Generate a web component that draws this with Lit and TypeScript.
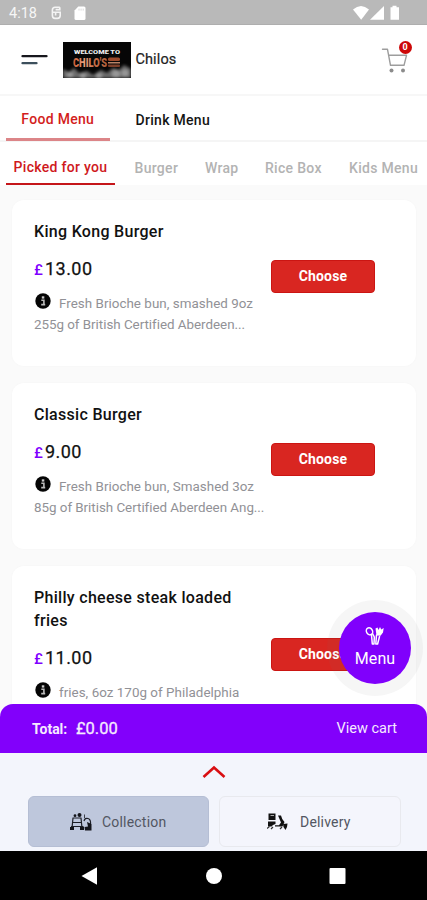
import { LitElement, html, css, svg } from "lit";
import { customElement, property } from "lit/decorators.js";

interface Dish {
  name: string;
  price: string;
  lines: string[];
}

const dishes: Dish[] = [
  {
    name: "King Kong Burger",
    price: "13.00",
    lines: ["Fresh Brioche bun, smashed 9oz", "255g of British Certified Aberdeen..."],
  },
  {
    name: "Classic Burger",
    price: "9.00",
    lines: ["Fresh Brioche bun, Smashed 3oz", "85g of British Certified Aberdeen Ang..."],
  },
  {
    name: "Philly cheese steak loaded fries",
    price: "11.00",
    lines: ["fries, 6oz 170g of Philadelphia", ""],
  },
];

@customElement("dish-card")
export class DishCard extends LitElement {
  @property({ attribute: false }) dish!: Dish;

  static styles = css`
    :host {
      display: block;
      box-sizing: border-box;
      flex: none;
      min-height: 166px;
      padding: 20px 41px 30px 22px;
      border-radius: 12px;
      background: #fff;
      box-shadow: 0 0 3px rgba(0, 0, 0, 0.025);
    }
    .row { display: flex; align-items: center; }
    .info { width: 238px; flex: none; white-space: nowrap; }
    .name {
      width: 210px;
      white-space: normal;
      font-size: 16px;
      line-height: 23px;
      font-weight: 500;
      letter-spacing: 0.3px;
      color: #111;
    }
    .price {
      display: flex;
      align-items: baseline;
      gap: 2px;
      margin-top: 14px;
      height: 24px;
      line-height: 24px;
      font-size: 18px;
      letter-spacing: 0.45px;
      color: #111;
    }
    .price span { color: #8000ff; font-size: 15px; font-weight: 500; width: 9px; letter-spacing: 0; }
    .price b { font-weight: 400; -webkit-text-stroke: 0.25px #111; }
    .desc {
      display: flex;
      margin-top: 12px;
      height: 21px;
      line-height: 21px;
      font-size: 13.4px;
      letter-spacing: 0.03px;
      color: #919196;
    }
    .desc.second { margin-top: 0; letter-spacing: -0.03px; }
    .dot { width: 16px; height: 16px; margin: 0 8px 0 1px; flex: none; }
    .choose {
      flex: none;
      width: 104px;
      height: 33px;
      margin: -2px 0 0 -1px;
      box-sizing: border-box;
      border: 1px solid #cb1512;
      border-radius: 4px;
      background: #d92621;
      color: #fff;
      font: 700 14px/31px Roboto, sans-serif;
      letter-spacing: 0.15px;
      text-align: center;
      padding: 0;
    }
  `;

  render() {
    const d = this.dish;
    return html`<div class="row">
      <div class="info">
        <div class="name">${d.name}</div>
        <div class="price"><span>£</span><b>${d.price}</b></div>
        <div class="desc">
          <svg class="dot" viewBox="0 0 16 16">
            <circle cx="8" cy="8" r="7.7" fill="#050505" />
            <path d="M6.3 7.300H8.900V11M6.200 11.600H10.200" stroke="#bbb" stroke-width="1.600" fill="none" />
            <rect x="6.800" y="3.300" width="2.500" height="2.300" fill="#ccc" />
          </svg>
          <span>${d.lines[0]}</span>
        </div>
        <div class="desc second"><span>${d.lines[1]}</span></div>
      </div>
      <button class="choose">Choose</button>
    </div>`;
  }
}

const statusLeft = svg`
  <g fill="none" stroke="#f4f4f4" stroke-width="1.6">
    <path d="M8.8 1.2H4.2Q1.4 1.2 1.4 4V6.2H8.4M1.4 6.2V9.6Q1.4 12.4 4 12.4H6.4Q9.2 12.4 9.2 9.6V6.2H4.6V9.4M8.8 1.2V3.6H4.6" />
  </g>`;

@customElement("app-root")
export class AppRoot extends LitElement {
  static styles = css`
    :host {
      display: flex;
      flex-direction: column;
      position: relative;
      width: 427px;
      height: 900px;
      overflow: hidden;
      background: #fafafa;
      font-family: Roboto, "Liberation Sans", sans-serif;
      white-space: nowrap;
    }
    svg { display: block; flex: none; }
    .status {
      flex: none;
      display: flex;
      align-items: center;
      box-sizing: border-box;
      height: 25px;
      padding: 2px 0 0 9px;
      background: #b9b9b9;
      border-bottom: 1px solid #aeaeae;
      color: #f6f6f6;
    }
    .clock { width: 42px; font-size: 14.5px; letter-spacing: 0; padding-top: 1px; }
    .sd { margin-left: 12px; }
    .signals { margin-left: auto; margin-right: 26px; }
    .header {
      flex: none;
      display: flex;
      align-items: center;
      box-sizing: border-box;
      height: 71px;
      padding: 0 14px 0 21px;
      background: #fff;
      border-bottom: 2px solid #f7f7f7;
    }
    .logo { margin-left: 14.5px; margin-top: 1px; }
    .shop { margin-left: 5px; font-size: 14.5px; letter-spacing: 0.1px; color: #222; -webkit-text-stroke: 0.2px #222; }
    .cart { position: relative; margin-left: auto; width: 32px; height: 38px; }
    .badge {
      position: absolute;
      left: 17.5px;
      top: 0;
      width: 13px;
      height: 13px;
      border-radius: 50%;
      background: #cd0808;
      color: #fff;
      font-size: 9px;
      font-weight: 700;
      line-height: 13.5px;
      text-align: center;
    }
    .tabs {
      flex: none;
      display: flex;
      box-sizing: border-box;
      height: 46px;
      padding-left: 6px;
      background: #fff;
      border-bottom: 2px solid #f5f5f5;
      font-size: 14px;
      font-weight: 500;
      letter-spacing: 0.3px;
      color: #151515;
    }
    .tab { line-height: 49px; margin-left: 26px; }
    .tab.on {
      margin: 0 0 -1px;
      box-sizing: border-box;
      width: 103.500px;
      text-align: center;
      line-height: 46px;
      color: #d31d20;
      border-bottom: 3px solid #dc8588;
    }
    .cats {
      flex: none;
      display: flex;
      box-sizing: border-box;
      height: 43px;
      padding-left: 6px;
      background: #fff;
      font-size: 14px;
      font-weight: 500;
      color: #b3b3b3;
    }
    .cat { line-height: 53px; flex: none; letter-spacing: 0.3px; }
    .cat.on {
      width: 109px;
      text-align: center;
      color: #cf191c;
      line-height: 51px;
      border-bottom: 2px solid #c5161a;
      height: 41px;
      margin-right: 19.5px;
    }
    .burger { width: 70.5px; }
    .wrap { width: 60px; }
    .rice { width: 84px; }
    .list {
      flex: none;
      display: flex;
      flex-direction: column;
      gap: 17px;
      box-sizing: border-box;
      height: 533px;
      padding: 15px 11px 0 12px;
      overflow: hidden;
    }
    .fab {
      position: absolute;
      left: 327px;
      top: 600px;
      width: 96px;
      height: 96px;
      border-radius: 50%;
      background: rgba(120, 120, 120, 0.065);
      display: flex;
      align-items: center;
      justify-content: center;
    }
    .disc {
      width: 72px;
      height: 72px;
      border-radius: 50%;
      background: #8000fc;
      color: #fff;
      display: flex;
      flex-direction: column;
      align-items: center;
      box-sizing: border-box;
      padding-top: 14px;
      font-size: 16px;
      line-height: 23px;
      letter-spacing: 0.1px;
    }
    .disc svg { margin-bottom: 1px; }
    .total {
      flex: none;
      position: relative;
      display: flex;
      align-items: center;
      box-sizing: border-box;
      height: 49px;
      margin-top: -14px;
      padding: 0 30px 0 32px;
      border-radius: 13px 13px 0 0;
      background: #8200fb;
      color: #f5eaff;
    }
    .label { font-size: 14px; font-weight: 700; width: 44px; }
    .sum { font-size: 16.5px; -webkit-text-stroke: 0.3px #f5eaff; }
    .view { margin-left: auto; font-size: 14.5px; }
    .bottom {
      flex: 1;
      display: flex;
      flex-direction: column;
      align-items: center;
      background: #f3f5fc;
      overflow: hidden;
    }
    .chevron { margin: 11px 0 17px; }
    .modes { display: flex; align-self: stretch; gap: 10px; padding-left: 28px; }
    .mode {
      display: flex;
      align-items: center;
      box-sizing: border-box;
      height: 51px;
      border-radius: 6px;
      font-size: 14px;
      letter-spacing: 0.2px;
      color: #525662;
    }
    .collect { width: 181px; padding-left: 41px; gap: 9px; background: #bec7dc; border: 1px solid #b5bed4; }
    .deliver { width: 182px; padding-left: 47px; gap: 12px; border: 1px solid #e8e9ee; background: #f4f5fc; }
    .nav {
      flex: none;
      display: flex;
      align-items: center;
      justify-content: space-between;
      box-sizing: border-box;
      height: 49px;
      padding: 0 81px 0 80px;
      background: #000;
    }
  `;

  render() {
    return html`
      <div class="status">
        <span class="clock">4:18</span>
        <svg width="11" height="14" viewBox="0 0 11 14">${statusLeft}</svg>
        <svg class="sd" width="12" height="15" viewBox="0 0 12 15">
          <path d="M4.3 .5H10Q11.5 .5 11.5 2V12.5Q11.5 14 10 14H2Q.5 14 .5 12.5V4.4Z" fill="#fff" />
          <path d="M5 2.6v2M7.1 2.6v2M9.2 2.6v2" stroke="#d6d6d6" stroke-width=".9" />
        </svg>
        <svg class="signals" width="48" height="16" viewBox="0 0 48 16">
          <g fill="#fff">
            <path d="M0 4.5Q8 -2.5 16 4.500L8.200 14.800Z" />
            <path d="M17 14.800L31 1V14.800Z" />
            <path d="M37.500 2.300H39.500V.8H43.500V2.300H46V14.800H37.500Z" />
          </g>
        </svg>
      </div>
      <div class="header">
        <svg width="27" height="12" viewBox="0 0 27 12">
          <path d="M1.500 2.200H25.500" stroke="#17171d" stroke-width="2.300" stroke-linecap="round" />
          <path d="M1.500 9.200H15.500" stroke="#3c4f5c" stroke-width="2.300" stroke-linecap="round" />
        </svg>
        <svg class="logo" width="68" height="36" viewBox="0 0 68 36">
          <defs>
            <linearGradient id="ember" x1="0" x2="1">
              <stop offset="0" stop-color="#c95a34" />
              <stop offset=".35" stop-color="#e8a482" />
              <stop offset=".6" stop-color="#c96f48" />
              <stop offset="1" stop-color="#b0603c" />
            </linearGradient>
            <filter id="soft" x="-20%" y="-50%" width="140%" height="200%"><feGaussianBlur stdDeviation="1.6" /></filter>
          </defs>
          <rect width="68" height="36" fill="#060606" />
          <svg width="68" height="36" viewBox="0 0 68 36">
            <g filter="url(#soft)" fill="#989898">
              <path d="M0 27L6 30L11 26L16 31L24 29L30 33L38 28L44 31L50 26L56 28L61 23L68 27V36H0Z" fill="#6c6c6c" />
              <circle cx="7" cy="33" r="3" /><circle cx="20" cy="34" r="3" /><circle cx="53" cy="32" r="4" /><circle cx="62" cy="31" r="3.500" />
              <circle cx="36" cy="34" r="3" />
            </g>
          </svg>
          <text x="11" y="12" font-family="Roboto, sans-serif" font-size="5.500" font-weight="900" textLength="46" lengthAdjust="spacingAndGlyphs" fill="#eee">WELCOME TO</text>
          <text x="10" y="24.500" font-family="Roboto, sans-serif" font-size="13" font-weight="900" textLength="34" lengthAdjust="spacingAndGlyphs" fill="url(#ember)">CHILO'S</text>
          <rect x="45" y="15.500" width="12" height="3.500" rx="1.500" fill="#9c4a2c" />
          <rect x="45" y="20" width="12" height="1.500" fill="#b98266" />
          <rect x="45" y="22.500" width="12" height="2.500" rx="1" fill="#7b3f2a" />
        </svg>
        <span class="shop">Chilos</span>
        <div class="cart">
          <svg width="32" height="36" viewBox="0 0 32 36">
            <g fill="none" stroke="#9d9d9d" stroke-width="1.400" stroke-linejoin="round" stroke-linecap="round">
              <path d="M1.500 8.300H6.500L9.500 24.300H23L25.500 14.300H7.700" />
            </g>
            <circle cx="10.500" cy="29.500" r="2" fill="#8c8c8c" /><circle cx="22" cy="29.500" r="2" fill="#8c8c8c" />
          </svg>
          <span class="badge">0</span>
        </div>
      </div>
      <div class="tabs"><span class="tab on">Food Menu</span><span class="tab">Drink Menu</span></div>
      <div class="cats">
        <span class="cat on">Picked for you</span>
        <span class="cat burger">Burger</span>
        <span class="cat wrap">Wrap</span>
        <span class="cat rice">Rice Box</span>
        <span class="cat">Kids Menu</span>
      </div>
      <div class="list">${dishes.map((d) => html`<dish-card .dish=${d}></dish-card>`)}</div>
      <div class="total">
        <span class="label">Total:</span><span class="sum">£0.00</span><span class="view">View cart</span>
      </div>
      <div class="bottom">
        <svg class="chevron" width="24" height="15" viewBox="0 0 24 15">
          <path d="M1.500 13L12 3.500L22.500 13" fill="none" stroke="#d90e12" stroke-width="2.600" />
        </svg>
        <div class="modes">
          <div class="mode collect">
            <svg width="23" height="18" viewBox="0 0 23 18">
              <g fill="none" stroke="#1c1e26" stroke-width="1.200">
                <path d="M2.500 5H11.500M3 5L2 15M11 5L12 15M2.500 9.500H12M1 13.500H13.500" />
                <path d="M14 8Q15 4.500 18 5.500Q21 6.500 20.500 11" />
                <path d="M14.500 1.500V5" stroke-width=".8" />
              </g>
              <g fill="#14151b">
                <circle cx="5" cy="2.700" r="1.400" /><circle cx="9.500" cy="2" r="2" />
                <path d="M0 14H4V17H0ZM10 14H14V17H10ZM17 9L21.500 11V17.500H15L14.500 14L18 13.500Z" />
              </g>
            </svg>
            <span>Collection</span>
          </div>
          <div class="mode deliver">
            <svg width="21" height="18" viewBox="0 0 21 18">
              <g fill="#111">
                <path d="M1.500 .5H8.500V7H1.500Z" />
                <path d="M1 8.500H8.500V11L6 12L4.500 13.500H1Z" />
                <path d="M11 2.500H14Q15 7 17.500 9L15.500 13.500H8V12.300H12L14 9.500Z" />
                <path d="M16 11L20.500 10.500L20 14L18.500 17L16.500 14Z" />
              </g>
              <path d="M3.500 2.500H7" stroke="#aaa" stroke-width="1" />
              <path d="M0 15.500L2.500 13.500M4 16L6 14M13 16L15 14" stroke="#333" stroke-width="1.200" />
            </svg>
            <span>Delivery</span>
          </div>
        </div>
      </div>
      <div class="nav">
        <svg width="18" height="20" viewBox="0 0 18 20"><path d="M1.500 10L17 1.200V18.800Z" fill="#fff" /></svg>
        <svg width="18" height="18" viewBox="0 0 18 18"><circle cx="9" cy="9" r="8" fill="#fff" /></svg>
        <svg width="17" height="18" viewBox="0 0 17 18"><rect x=".5" y="1" width="16" height="16" rx="1" fill="#fff" /></svg>
      </div>
      <div class="fab">
        <div class="disc">
          <svg width="20" height="20" viewBox="0 0 20 20">
            <g fill="none" stroke="#fff" stroke-width="1.500" stroke-linecap="round" stroke-linejoin="round">
              <ellipse cx="4.500" cy="5.300" rx="3" ry="3.700" transform="rotate(-30 4.500 5.300)" />
              <path d="M6.500 9L7.300 18H9L9.300 11L7.500 7.500" />
              <path d="M11.500 9L10.800 18H12.600L14.500 10.500" />
            </g>
            <path d="M10.500 2.500L12.500 1.500L13.500 4L15 1L16.300 3.500L18.700 2L18 6.500L15.500 9.800L11.500 9.500Z" fill="#fff" />
          </svg>
          <span>Menu</span>
        </div>
      </div>
    `;
  }
}
